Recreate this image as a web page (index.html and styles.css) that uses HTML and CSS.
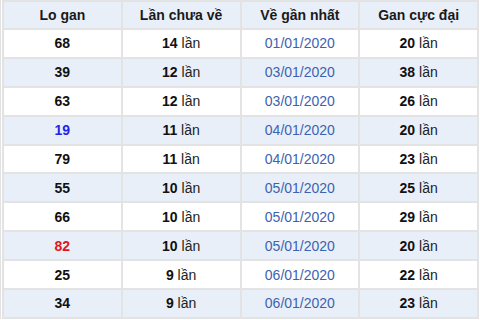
FILE: index.html
```html
<!DOCTYPE html>
<html lang="vi">
<head>
<meta charset="utf-8">
<link rel="stylesheet" href="styles.css">
</head>
<body>
<div class="wrap">
<table class="gan">
<thead>
<tr><th>Lo gan</th><th>Lần chưa về</th><th>Về gần nhất</th><th>Gan cực đại</th></tr>
</thead>
<tbody>
<tr><td class="num">68</td><td><b>14</b> lần</td><td class="date">01/01/2020</td><td><b>20</b> lần</td></tr>
<tr><td class="num">39</td><td><b>12</b> lần</td><td class="date">03/01/2020</td><td><b>38</b> lần</td></tr>
<tr><td class="num">63</td><td><b>12</b> lần</td><td class="date">03/01/2020</td><td><b>26</b> lần</td></tr>
<tr><td class="num blue">19</td><td><b>11</b> lần</td><td class="date">04/01/2020</td><td><b>20</b> lần</td></tr>
<tr><td class="num">79</td><td><b>11</b> lần</td><td class="date">04/01/2020</td><td><b>23</b> lần</td></tr>
<tr><td class="num">55</td><td><b>10</b> lần</td><td class="date">05/01/2020</td><td><b>25</b> lần</td></tr>
<tr><td class="num">66</td><td><b>10</b> lần</td><td class="date">05/01/2020</td><td><b>29</b> lần</td></tr>
<tr><td class="num red">82</td><td><b>10</b> lần</td><td class="date">05/01/2020</td><td><b>20</b> lần</td></tr>
<tr><td class="num">25</td><td><b>9</b> lần</td><td class="date">06/01/2020</td><td><b>22</b> lần</td></tr>
<tr><td class="num">34</td><td><b>9</b> lần</td><td class="date">06/01/2020</td><td><b>23</b> lần</td></tr>
</tbody>
</table>
</div>
</body>
</html>
```
FILE: styles.css
```css
html, body {
  margin: 0;
  padding: 0;
  background: #ffffff;
}
body {
  font-family: "Liberation Sans", Arial, sans-serif;
  font-size: 14px;
  color: #111;
}
.wrap {
  width: 478px;
  padding: 0 0 0 1px;
  border-left: 1px solid #e2e2e2;
  box-sizing: border-box;
}
.gan {
  width: 477px;
  border-collapse: collapse;
  table-layout: fixed;
  border: 2px solid #e3e3e3;
  border-top: 2px solid #f4f4f4;
}
.gan th, .gan td {
  border: 2px solid #e3e3e3;
  text-align: center;
  padding: 0;
}
.gan th {
  height: 26px;
  background: #e9eff9;
  font-weight: bold;
  color: #1a1a1a;
  font-size: 14px;
}
.gan td {
  height: 26.9px;
  color: #222;
}
.gan tbody tr:nth-child(odd) td {
  background: #ffffff;
}
.gan tbody tr:nth-child(even) td {
  background: #e9eff9;
}
.gan td b {
  color: #111;
}
.gan td.num {
  font-weight: bold;
  color: #111;
}
.gan td.num.blue {
  color: #2424e8;
}
.gan td.num.red {
  color: #e3141c;
}
.gan td.date {
  color: #3d62b0;
}
```
